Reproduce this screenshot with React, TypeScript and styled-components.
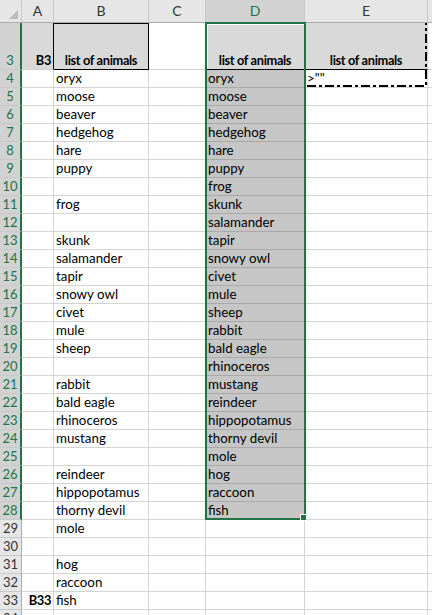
import React from 'react';
import styled, { createGlobalStyle } from 'styled-components';

const GREEN = '#217346';
const GRID = '#d4d4d4';
const FONT = `Lato, "Open Sans", "Liberation Sans", sans-serif`;

const Global = createGlobalStyle`
  html, body { margin: 0; padding: 0; background: #fff; }
  body { overflow: hidden; }
`;

const Sheet = styled.div`
  position: relative;
  width: 432px;
  height: 615px;
  overflow: hidden;
  display: grid;
  grid-template-columns: 22px 32px 95px 57px 99px 123px 1fr;
  grid-template-rows: 23px 47px;
  grid-auto-rows: 18px;
  font-family: ${FONT};
  font-size: 13.3px;
  color: #000;
`;

const Corner = styled.div`
  position: relative;
  box-sizing: border-box;
  background: #e6e6e6;
  border-right: 1px solid #c8c8c8;
  border-bottom: 1px solid #ababab;
  &::after {
    content: '';
    position: absolute;
    right: 3px;
    bottom: 3px;
    width: 0;
    height: 0;
    border-left: 9px solid transparent;
    border-bottom: 9px solid #bcbcbc;
  }
`;

const ColHeader = styled.div<{ $selected?: boolean }>`
  box-sizing: border-box;
  display: flex;
  justify-content: center;
  align-items: flex-end;
  padding-bottom: 2px;
  line-height: 18px;
  font-size: 14px;
  background: ${(p) => (p.$selected ? '#d2d2d2' : '#e6e6e6')};
  color: ${(p) => (p.$selected ? GREEN : '#333')};
  border-right: 1px solid #c8c8c8;
  border-bottom: 1px solid #ababab;
`;

const RowHeader = styled.div<{ $selected?: boolean }>`
  box-sizing: border-box;
  display: flex;
  justify-content: center;
  align-items: flex-end;
  line-height: 17px;
  font-size: 13px;
  background: ${(p) => (p.$selected ? '#d2d2d2' : '#e6e6e6')};
  color: ${(p) => (p.$selected ? GREEN : '#333')};
  border-right: ${(p) => (p.$selected ? `2px solid ${GREEN}` : '1px solid #ababab')};
  border-bottom: 1px solid #c8c8c8;
`;

type Align = 'left' | 'center' | 'right';

const Cell = styled.div<{
  $fill?: string;
  $bold?: boolean;
  $align?: Align;
  $right?: string;
  $bottom?: string;
  $topEdge?: boolean;
  $active?: boolean;
}>`
  box-sizing: border-box;
  display: flex;
  align-items: flex-end;
  justify-content: ${(p) =>
    p.$align === 'center' ? 'center' : p.$align === 'right' ? 'flex-end' : 'flex-start'};
  padding: 0 2px;
  line-height: 17px;
  white-space: nowrap;
  overflow: hidden;
  background: ${(p) => p.$fill ?? '#fff'};
  font-weight: ${(p) => (p.$bold ? 700 : 400)};
  font-size: ${(p) => (p.$bold ? '12.8px' : 'inherit')};
  letter-spacing: ${(p) => (p.$bold ? '-0.35px' : 'normal')};
  border-right: 1px solid ${(p) => p.$right ?? GRID};
  border-bottom: 1px solid ${(p) => p.$bottom ?? GRID};
  box-shadow: ${(p) =>
    p.$topEdge
      ? 'inset 0 1px 0 #000'
      : p.$active
      ? 'inset 3px 3px 0 -1px #fff'
      : 'none'};
`;

const Selection = styled.div`
  position: absolute;
  left: 205px;
  top: 22px;
  width: 101px;
  height: 498px;
  box-sizing: border-box;
  border: 2px solid ${GREEN};
  pointer-events: none;
`;

const FillHandle = styled.div`
  position: absolute;
  left: 300px;
  top: 514px;
  width: 7px;
  height: 7px;
  box-sizing: border-box;
  background: ${GREEN};
  border: 1px solid #fff;
`;

const Marquee = styled.svg`
  position: absolute;
  left: 305px;
  top: 22px;
  width: 124px;
  height: 67px;
  pointer-events: none;
`;

const TITLE = 'list of animals';
const TITLE_BG = '#d9d9d9';
const PICKED_BG = '#c6c6c6';

const listB: Record<number, string> = {
  4: 'oryx', 5: 'moose', 6: 'beaver', 7: 'hedgehog', 8: 'hare', 9: 'puppy',
  11: 'frog', 13: 'skunk', 14: 'salamander', 15: 'tapir', 16: 'snowy owl',
  17: 'civet', 18: 'mule', 19: 'sheep', 21: 'rabbit', 22: 'bald eagle',
  23: 'rhinoceros', 24: 'mustang', 26: 'reindeer', 27: 'hippopotamus',
  28: 'thorny devil', 29: 'mole', 31: 'hog', 32: 'raccoon', 33: 'fish',
};

const listD = [
  'oryx', 'moose', 'beaver', 'hedgehog', 'hare', 'puppy', 'frog', 'skunk',
  'salamander', 'tapir', 'snowy owl', 'civet', 'mule', 'sheep', 'rabbit',
  'bald eagle', 'rhinoceros', 'mustang', 'reindeer', 'hippopotamus',
  'thorny devil', 'mole', 'hog', 'raccoon', 'fish',
];

const COLS = ['A', 'B', 'C', 'D', 'E', ''];
const ROWS = Array.from({ length: 32 }, (_, i) => i + 3);

export default function App() {
  return (
    <>
      <Global />
      <Sheet>
        <Corner />
        {COLS.map((c, i) => (
          <ColHeader key={`h${i}`} $selected={c === 'D'}>
            {c}
          </ColHeader>
        ))}

        {ROWS.map((r) => {
          const selected = r >= 3 && r <= 28;
          if (r === 3) {
            return (
              <React.Fragment key={r}>
                <RowHeader $selected>{r}</RowHeader>
                <Cell $fill={TITLE_BG} $bold $align="right" $right="#000">B3</Cell>
                <Cell $fill={TITLE_BG} $bold $align="center" $right="#000" $bottom="#000" $topEdge>
                  {TITLE}
                </Cell>
                <Cell />
                <Cell $fill={TITLE_BG} $bold $align="center" $bottom="#000" $active>
                  {TITLE}
                </Cell>
                <Cell $fill={TITLE_BG} $bold $align="center" $bottom="#000">
                  {TITLE}
                </Cell>
                <Cell />
              </React.Fragment>
            );
          }
          const d = selected ? listD[r - 4] : undefined;
          return (
            <React.Fragment key={r}>
              <RowHeader $selected={selected}>{r}</RowHeader>
              <Cell $bold $align="right">{r === 33 ? 'B33' : ''}</Cell>
              <Cell>{listB[r] ?? ''}</Cell>
              <Cell />
              {selected ? (
                <Cell $fill={PICKED_BG} $bottom="#a9a9a9" $right="#a9a9a9">{d}</Cell>
              ) : (
                <Cell />
              )}
              <Cell>{r === 4 ? '>""' : ''}</Cell>
              <Cell />
            </React.Fragment>
          );
        })}

        <Marquee viewBox="0 0 124 67">
          <path
            d="M2 64 H121 V1"
            fill="none"
            stroke="#000"
            strokeWidth="2"
            strokeDasharray="9 3 3 3"
          />
        </Marquee>
        <Selection />
        <FillHandle />
      </Sheet>
    </>
  );
}
